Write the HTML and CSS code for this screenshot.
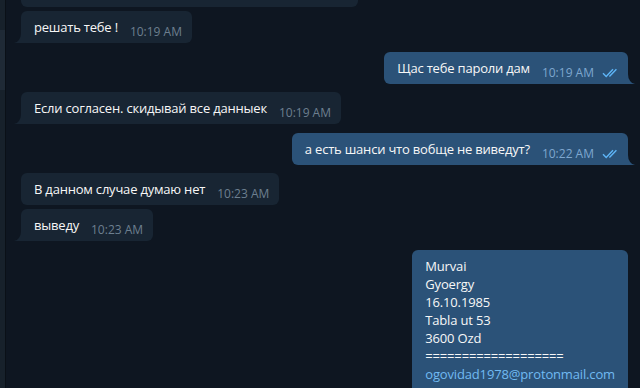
FILE: index.html
```html
<!DOCTYPE html>
<html lang="ru">
<head>
    <meta charset="UTF-8">
    <meta name="viewport" content="width=device-width, initial-scale=1.0">
    <title>Чат</title>
    <link rel="stylesheet" href="styles.css">
</head>
<body>
    <div class="app">
        <div class="sidebar"><div class="sidebar-thumb"></div></div>

        <div class="chat">
            <div class="history">
                <div class="msg in">
                    <div class="bubble">
                        <span class="text">ну смотри сам как хочешь тут мне</span>
                        <span class="meta">edited 10:18 AM</span>
                    </div>
                </div>
                <div class="msg in grouped">
                    <div class="bubble tail">
                        <span class="text">решать тебе !</span>
                        <span class="meta">10:19 AM</span>
                    </div>
                </div>

                <div class="msg out">
                    <div class="bubble tail">
                        <span class="text">Щас тебе пароли дам</span>
                        <span class="meta">10:19 AM
                            <svg class="checks" viewBox="0 0 18 10"><path d="M1 5.2l3.2 3.3L11 1.3M7.4 8.5L14.4 1.3" /></svg>
                        </span>
                    </div>
                </div>

                <div class="msg in">
                    <div class="bubble tail">
                        <span class="text">Если согласен. скидывай все данныек</span>
                        <span class="meta">10:19 AM</span>
                    </div>
                </div>

                <div class="msg out">
                    <div class="bubble tail">
                        <span class="text">а есть шанси что вобще не виведут?</span>
                        <span class="meta">10:22 AM
                            <svg class="checks" viewBox="0 0 18 10"><path d="M1 5.2l3.2 3.3L11 1.3M7.4 8.5L14.4 1.3" /></svg>
                        </span>
                    </div>
                </div>

                <div class="msg in">
                    <div class="bubble">
                        <span class="text">В данном случае думаю нет</span>
                        <span class="meta">10:23 AM</span>
                    </div>
                </div>
                <div class="msg in grouped">
                    <div class="bubble tail">
                        <span class="text">выведу</span>
                        <span class="meta">10:23 AM</span>
                    </div>
                </div>

                <div class="msg out">
                    <div class="bubble block">
                        <div>Murvai</div>
                        <div>Gyoergy</div>
                        <div>16.10.1985</div>
                        <div>Tabla ut 53</div>
                        <div>3600 Ozd</div>
                        <div>===================</div>
                        <div><span class="link">ogovidad1978@protonmail.com</span></div>
                        <div>City: 201</div>
                        <div>Pass: 1978</div>
                    </div>
                </div>
            </div>
        </div>
    </div>
</body>
</html>
```

FILE: styles.css
```css
body {
    margin: 0;
    background-color: #0e1621;
    font-family: "Open Sans", "Noto Sans", sans-serif;
    overflow: hidden;
}
.app {
    display: flex;
    height: 388px;
    overflow: hidden;
}
.sidebar {
    flex: none;
    width: 5px;
    padding-top: 30px;
    background-color: #17212b;
    border-right: 1px solid #0a1017;
}
.sidebar-thumb {
    height: 60px;
    background-color: #1f2a36;
}
.chat {
    flex: 1;
    padding: 0 12px 0 15px;
    overflow: hidden;
}
.history {
    display: flex;
    flex-direction: column;
    margin-top: -25px;
}
.msg {
    display: flex;
    margin-top: 8.5px;
}
.msg:first-child {
    margin-top: 0;
}
.msg.grouped {
    margin-top: 4px;
}
.msg.out {
    justify-content: flex-end;
}
.bubble {
    position: relative;
    display: flex;
    align-items: flex-end;
    padding: 7px 10px 7px 13px;
    border-radius: 6px;
    background-color: #182533;
    color: #f7f7f7;
    font-size: 13px;
    line-height: 18px;
}
.text {
    letter-spacing: -0.2px;
}
.out .bubble {
    padding-right: 8px;
    background-color: #2b5278;
}
.bubble.block {
    display: block;
    padding: 7px 13px 7px 13px;
    letter-spacing: -0.15px;
}
.meta {
    display: flex;
    align-items: center;
    margin: 0 0 -3px 12px;
    font-size: 12px;
    line-height: 14px;
    color: #6d7f8f;
    white-space: nowrap;
}
.out .meta {
    color: #7ea7cf;
}
.checks {
    width: 18px;
    height: 10px;
    margin-left: 8px;
    fill: none;
    stroke: #5eb5f7;
    stroke-width: 1.4;
}
.link {
    color: #71baf2;
}

/* хвостик у последнего сообщения в группе */
.bubble.tail::before,
.bubble.tail::after {
    content: "";
    position: absolute;
    bottom: 0;
    width: 7px;
    height: 10px;
}
.in .bubble.tail {
    border-bottom-left-radius: 0;
}
.in .bubble.tail::before {
    left: -7px;
    background-color: #182533;
}
.in .bubble.tail::after {
    left: -7px;
    background-color: #0e1621;
    border-bottom-right-radius: 7px 10px;
}
.out .bubble.tail {
    border-bottom-right-radius: 0;
}
.out .bubble.tail::before {
    right: -7px;
    background-color: #2b5278;
}
.out .bubble.tail::after {
    right: -7px;
    background-color: #0e1621;
    border-bottom-left-radius: 7px 10px;
}
```
